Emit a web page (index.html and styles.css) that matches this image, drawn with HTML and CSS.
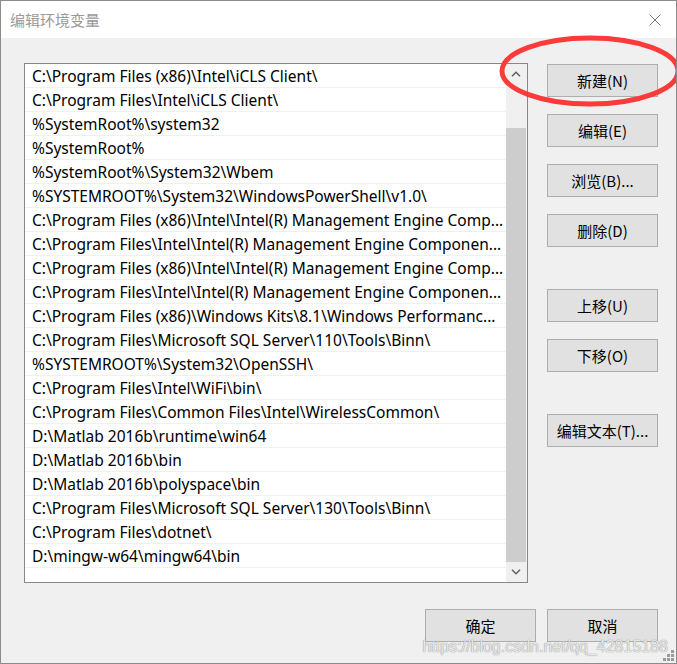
FILE: index.html
```html
<!DOCTYPE html>
<html lang="zh-CN">
<head>
    <meta charset="UTF-8">
    <title>编辑环境变量</title>
    <link rel="stylesheet" href="styles.css">
</head>
<body>
    <div class="window">
        <div class="titlebar">
            <span class="title">编辑环境变量</span>
            <svg class="close" width="12" height="12" viewBox="0 0 12 12">
                <path d="M0.5 0.5 L11.5 11.5 M11.5 0.5 L0.5 11.5" stroke="#7a7a7a" stroke-width="1" fill="none"/>
            </svg>
        </div>

        <div class="content">
            <div class="main">
                <div class="listbox">
                    <ul class="rows">
                        <li>C:\Program Files (x86)\Intel\iCLS Client\</li>
                        <li>C:\Program Files\Intel\iCLS Client\</li>
                        <li>%SystemRoot%\system32</li>
                        <li>%SystemRoot%</li>
                        <li>%SystemRoot%\System32\Wbem</li>
                        <li>%SYSTEMROOT%\System32\WindowsPowerShell\v1.0\</li>
                        <li>C:\Program Files (x86)\Intel\Intel(R) Management Engine Comp...</li>
                        <li>C:\Program Files\Intel\Intel(R) Management Engine Componen...</li>
                        <li>C:\Program Files (x86)\Intel\Intel(R) Management Engine Comp...</li>
                        <li>C:\Program Files\Intel\Intel(R) Management Engine Componen...</li>
                        <li>C:\Program Files (x86)\Windows Kits\8.1\Windows Performanc...</li>
                        <li>C:\Program Files\Microsoft SQL Server\110\Tools\Binn\</li>
                        <li>%SYSTEMROOT%\System32\OpenSSH\</li>
                        <li>C:\Program Files\Intel\WiFi\bin\</li>
                        <li>C:\Program Files\Common Files\Intel\WirelessCommon\</li>
                        <li>D:\Matlab 2016b\runtime\win64</li>
                        <li>D:\Matlab 2016b\bin</li>
                        <li>D:\Matlab 2016b\polyspace\bin</li>
                        <li>C:\Program Files\Microsoft SQL Server\130\Tools\Binn\</li>
                        <li>C:\Program Files\dotnet\</li>
                        <li>D:\mingw-w64\mingw64\bin</li>
                    </ul>
                    <div class="scrollbar">
                        <div class="arrow">
                            <svg width="10" height="6" viewBox="0 0 10 6"><path d="M1 5.2 L5 1.2 L9 5.2" stroke="#606060" stroke-width="1.5" fill="none"/></svg>
                        </div>
                        <div class="track"><div class="thumb"></div></div>
                        <div class="arrow">
                            <svg width="10" height="6" viewBox="0 0 10 6"><path d="M1 0.8 L5 4.8 L9 0.8" stroke="#606060" stroke-width="1.5" fill="none"/></svg>
                        </div>
                    </div>
                </div>

                <div class="side">
                    <button class="btn">新建(N)</button>
                    <button class="btn">编辑(E)</button>
                    <button class="btn">浏览(B)...</button>
                    <button class="btn">删除(D)</button>
                    <button class="btn spaced">上移(U)</button>
                    <button class="btn">下移(O)</button>
                    <button class="btn spaced">编辑文本(T)...</button>
                </div>
            </div>

            <div class="footer">
                <button class="btn">确定</button>
                <button class="btn">取消</button>
            </div>
        </div>

        <!-- 红圈标注 -->
        <svg class="mark" width="180" height="84" viewBox="0 0 180 84">
            <ellipse cx="93" cy="40" rx="88" ry="33" stroke="#fb3a3a" stroke-width="5" fill="none"/>
        </svg>

        <span class="watermark">https://blog.csdn.net/qq_42815188</span>

        <svg class="grip" width="12" height="12" viewBox="0 0 12 12" fill="#9a9a9a">
            <rect x="8" y="0" width="3" height="3"/>
            <rect x="4" y="4" width="3" height="3"/>
            <rect x="8" y="4" width="3" height="3"/>
            <rect x="0" y="8" width="3" height="3"/>
            <rect x="4" y="8" width="3" height="3"/>
            <rect x="8" y="8" width="3" height="3"/>
        </svg>
    </div>
</body>
</html>
```

FILE: styles.css
```css
body {
    margin: 0;
    font-family: 'Noto Sans', 'Noto Sans CJK SC', sans-serif;
    font-size: 15px;
    color: #000;
    background: #fff;
}

.window {
    position: relative;
    width: 677px;
    height: 664px;
    box-sizing: border-box;
    border: 1px solid #8c8c8c;
    display: flex;
    flex-direction: column;
    overflow: hidden;
}

/* 标题栏 */
.titlebar {
    height: 37px;
    flex-shrink: 0;
    background: #fff;
    display: flex;
    align-items: center;
    justify-content: space-between;
    padding: 0 15px 0 9px;
}

.title {
    font-family: 'Noto Sans CJK SC', sans-serif;
    color: #999;
}

.content {
    flex: 1;
    background: #f0f0f0;
    padding: 25px 18px 21px 23px;
    display: flex;
    flex-direction: column;
}

.main {
    display: flex;
    gap: 19px;
}

/* 列表 */
.listbox {
    width: 504px;
    height: 520px;
    box-sizing: border-box;
    border: 1px solid #828790;
    background: #fff;
    display: flex;
}

.rows {
    list-style: none;
    margin: 0;
    padding: 0;
    width: 481px;
}

.rows li {
    height: 21px;
    line-height: 21px;
    padding: 2px 0 0 7px;
    border-bottom: 1px solid #f0f0f0;
    font-size: 15.5px;
    white-space: nowrap;
    overflow: hidden;
}

.scrollbar {
    width: 21px;
    background: #f0f0f0;
    display: flex;
    flex-direction: column;
}

.arrow {
    height: 20px;
    display: flex;
    align-items: center;
    justify-content: center;
    padding-right: 1px;
}

.track {
    flex: 1;
    display: flex;
    flex-direction: column;
    justify-content: flex-end;
}

.thumb {
    height: 434px;
    width: 20px;
    background: #cdcdcd;
}

/* 按钮 */
.side {
    display: flex;
    flex-direction: column;
    padding-top: 1px;
}

.btn {
    width: 111px;
    height: 33px;
    box-sizing: border-box;
    border: 1px solid #adadad;
    background: #e1e1e1;
    font-family: 'Noto Sans CJK SC', sans-serif;
    font-size: 15px;
    color: #000;
    padding: 0;
}

.side .btn + .btn {
    margin-top: 17px;
}

.side .btn.spaced {
    margin-top: 42px;
}

.footer {
    margin-top: 26px;
    display: flex;
    justify-content: flex-end;
    gap: 11px;
}

/* 覆盖层 */
.mark {
    position: absolute;
    left: 496px;
    top: 30px;
}

.watermark {
    position: absolute;
    right: 8px;
    bottom: 7px;
    font-family: 'Liberation Sans', sans-serif;
    font-size: 16px;
    color: rgba(255, 255, 255, 0.8);
    text-shadow: 0 0 1px #888, 0 0 1px #aaa;
}

.grip {
    position: absolute;
    right: 1px;
    bottom: 1px;
}
```
